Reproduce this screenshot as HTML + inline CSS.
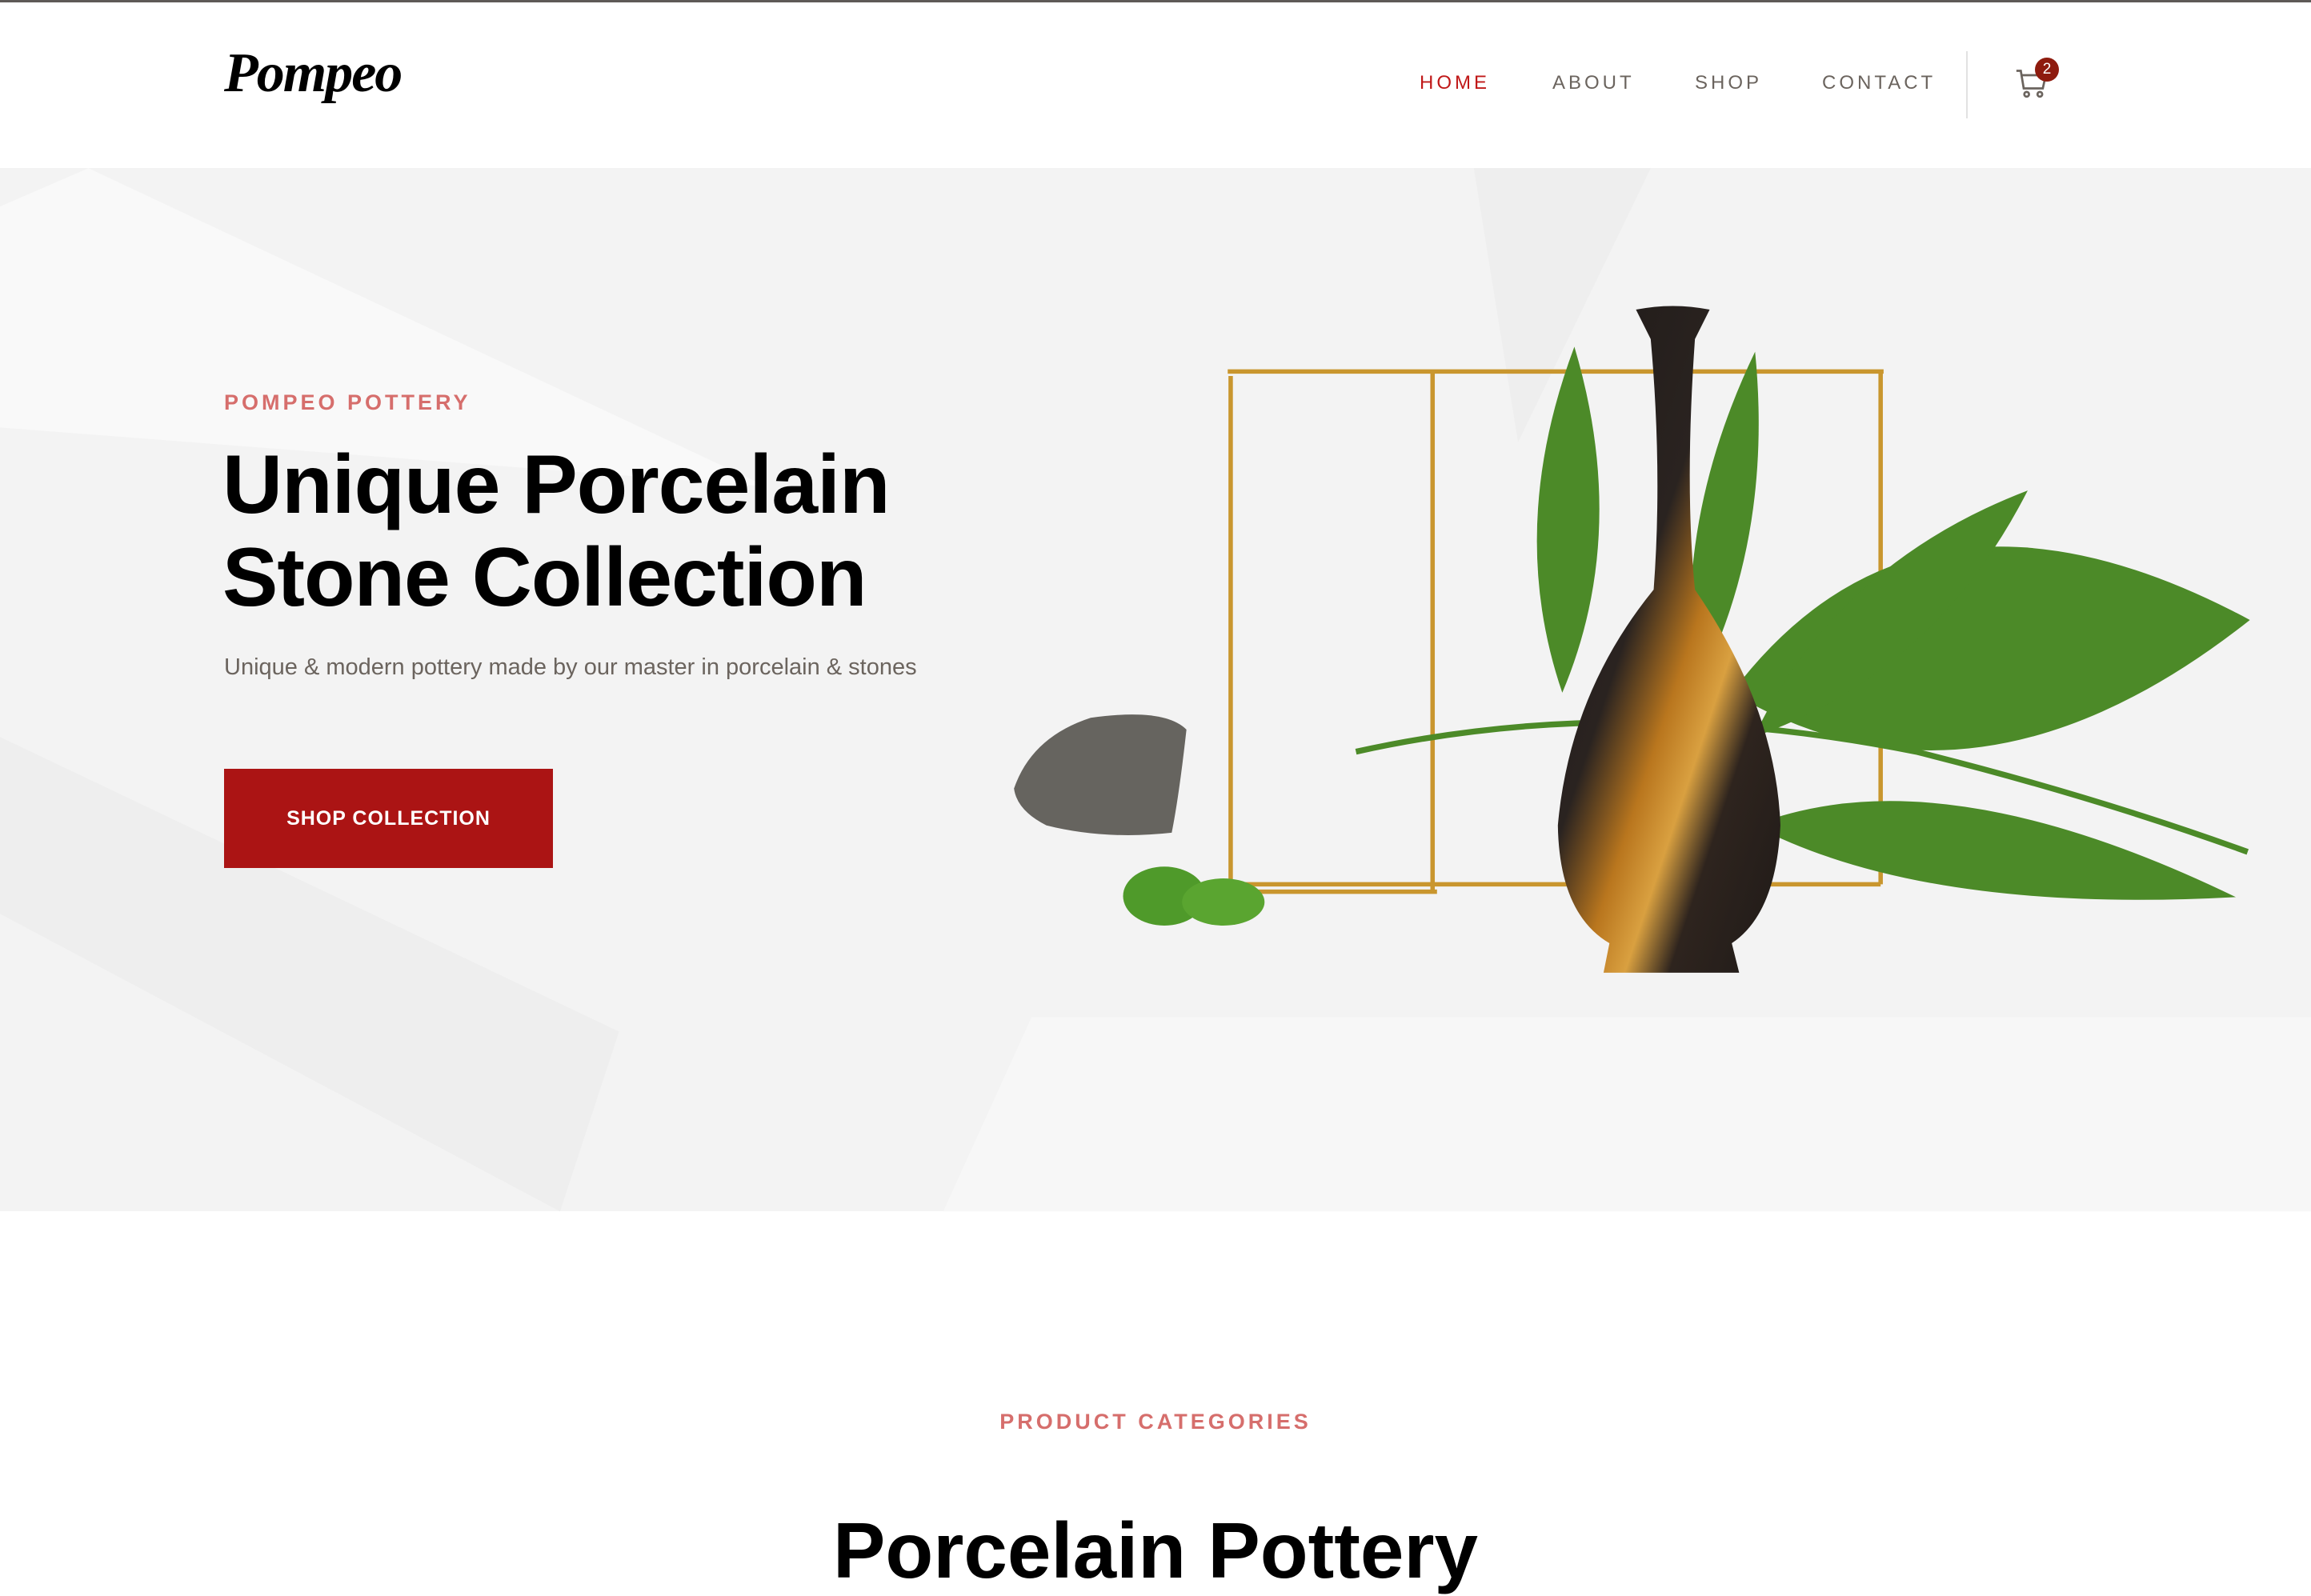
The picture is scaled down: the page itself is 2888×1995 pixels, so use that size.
<!DOCTYPE html>
<html><head><meta charset="utf-8"><style>
*{margin:0;padding:0;box-sizing:border-box}
body{width:2888px;height:1940px;overflow:hidden;background:#fff;font-family:"Liberation Sans",sans-serif;position:relative}
.topline{position:absolute;left:0;top:0;width:2888px;height:3px;background:#5e5a57}
.hero{position:absolute;left:0;top:210px;width:2888px;height:1304px;background:#f3f3f3;overflow:hidden}
svg.art{position:absolute;left:0;top:0}
.logo{position:absolute;left:280px;top:52px;font-family:"Liberation Serif",serif;font-style:italic;font-weight:bold;font-size:70px;color:#000;letter-spacing:-2px}
.nav a{position:absolute;top:90px;font-size:24px;letter-spacing:4px;color:#6b645e;text-decoration:none}
.div{position:absolute;left:2457px;top:64px;width:2px;height:84px;background:#e2e2e2}
.eyebrow{position:absolute;font-weight:bold;font-size:27px;letter-spacing:4px;color:#d66e6c}
h1{position:absolute;left:278px;top:548px;font-size:104px;line-height:116px;font-weight:bold;color:#000;letter-spacing:-1px}
.sub{position:absolute;left:280px;top:818px;font-size:29px;color:#6b645e}
.btn{position:absolute;left:280px;top:961px;width:411px;height:124px;background:#ab1414;color:#fff;font-weight:bold;font-size:25px;letter-spacing:1px;text-align:center;line-height:124px}
h2{position:absolute;left:0;width:2888px;text-align:center;top:1882px;font-size:98px;font-weight:bold;color:#000}
</style></head><body>
<div class="hero"></div>
<svg class="art" width="2888" height="1940" viewBox="0 0 1568 1053">
<defs>
<linearGradient id="vg" x1="0" y1="0" x2="1" y2="1">
<stop offset="0" stop-color="#1f1a18"/><stop offset="0.4" stop-color="#2a2320"/><stop offset="0.55" stop-color="#b9761e"/><stop offset="0.65" stop-color="#d9a040"/><stop offset="0.75" stop-color="#2e241e"/><stop offset="1" stop-color="#1f1a18"/>
</linearGradient>
</defs>
<polygon points="0,140 60,114 520,330 0,290" fill="#fafafa" opacity="0.8"/>
<polygon points="0,500 420,700 380,822 0,620" fill="#ebebeb" opacity="0.6"/>
<polygon points="700,690 1568,690 1568,822 640,822" fill="#f7f7f7"/>
<polygon points="1000,114 1120,114 1030,300" fill="#ebebeb" opacity="0.6"/>
<g stroke="#c9962e" stroke-width="3" fill="none">
<path d="M835,255 L835,600 M972,252 L972,605 M1276,252 L1276,600 M833,252 L1278,252 M835,600 L1276,600 M835,605 L975,605"/>
</g>
<g fill="#4c8a28">
<g transform="translate(1175,470) rotate(-8)"><path d="M0,0 Q150,-150 355,0 Q150,120 0,0Z"/></g>
<g transform="translate(1190,500) rotate(-42)"><path d="M0,0 Q120,-50 250,0 Q120,50 0,0Z"/></g>
<g transform="translate(1060,470) rotate(-88)"><path d="M0,0 Q110,-42 235,0 Q110,42 0,0Z"/></g>
<g transform="translate(1150,470) rotate(-80)"><path d="M0,0 Q110,-35 235,0 Q110,35 0,0Z"/></g>
<g transform="translate(1190,560) rotate(5)"><path d="M0,0 Q120,-60 330,20 Q120,50 0,0Z"/></g>
</g>
<path d="M920,510 Q1100,470 1300,510 Q1420,540 1525,578" stroke="#4c8a28" stroke-width="4" fill="none"/>
<path d="M1110,210 Q1135,205 1160,210 L1150,230 Q1143,330 1150,400 Q1205,480 1208,560 Q1205,620 1175,640 L1180,660 L1088,660 L1092,640 Q1058,620 1057,560 Q1065,470 1122,400 Q1128,320 1120,230 Z" fill="url(#vg)"/>
<path d="M688,535 Q700,500 740,487 Q790,480 805,495 Q800,540 795,565 Q750,570 710,560 Q690,550 688,535Z" fill="#66645f"/>
<ellipse cx="790" cy="608" rx="28" ry="20" fill="#4f9a2a"/><ellipse cx="830" cy="612" rx="28" ry="16" fill="#5aa530"/>
</svg>
<div class="topline"></div>
<div class="logo">Pompeo</div>
<div class="nav"><a style="left:1774px;color:#c01818">HOME</a><a style="left:1940px">ABOUT</a><a style="left:2118px">SHOP</a><a style="left:2277px">CONTACT</a></div>
<div class="div"></div>
<svg style="position:absolute;left:2518px;top:82px" width="44" height="46" viewBox="0 0 24 24" fill="none" stroke="#6b645e" stroke-width="1.5"><path d="M1,3 L4,3 L6,15 L19,15 L21,6 L5,6"/><circle cx="8" cy="19" r="1.6"/><circle cx="17" cy="19" r="1.6"/></svg>
<div style="position:absolute;left:2543px;top:72px;width:30px;height:30px;border-radius:50%;background:#8e1b0e;color:#fff;font-size:19px;text-align:center;line-height:30px">2</div>
<div class="eyebrow" style="left:280px;top:488px">POMPEO POTTERY</div>
<h1>Unique Porcelain<br>Stone Collection</h1>
<div class="sub">Unique &amp; modern pottery made by our master in porcelain &amp; stones</div>
<div class="btn">SHOP COLLECTION</div>
<div class="eyebrow" style="left:0;width:2888px;text-align:center;top:1762px">PRODUCT CATEGORIES</div>
<h2>Porcelain Pottery</h2>
</body></html>
